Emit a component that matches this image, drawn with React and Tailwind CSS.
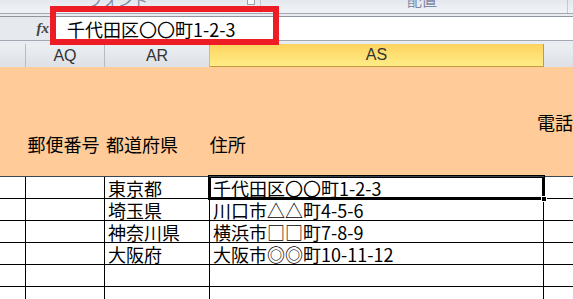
import React from 'react'

const jp = { fontFamily: '"Noto Sans CJK JP", "Noto Sans", sans-serif' }
const lat = { fontFamily: '"Liberation Sans", Arial, sans-serif' }

const rows = [
  ['東京都', '千代田区〇〇町1-2-3'],
  ['埼玉県', '川口市△△町4-5-6'],
  ['神奈川県', '横浜市□□町7-8-9'],
  ['大阪府', '大阪市◎◎町10-11-12'],
  ['', ''],
  ['', ''],
]

function Cell({ w, children, last, className = '' }) {
  return (
    <div
      className={`h-full shrink-0 flex items-end overflow-hidden whitespace-nowrap ${last ? 'flex-1' : 'border-r border-black'} ${className}`}
      style={w ? { width: w } : undefined}
    >
      {children}
    </div>
  )
}

export default function App() {
  return (
    <div className="w-[573px] h-[299px] overflow-hidden bg-white relative" style={jp}>
      {/* ribbon group labels */}
      <div className="h-[13px] bg-gradient-to-b from-[#e4e8ee] to-[#f1f3f6] relative overflow-hidden">
        <span className="absolute left-[88px] top-[-8px] text-[15px] leading-none text-[#7d8aa6]">フォント</span>
        <div className="absolute left-[247px] top-0 w-[8px] h-[5px] border-x border-b border-[#9aa3b0] bg-[#f7f8fa]" />
        <div className="absolute left-[260px] top-0 w-px h-[13px] bg-[#c4c9d0]" />
        <span className="absolute left-[407px] top-[-8px] text-[15px] leading-none text-[#7d8aa6]">配置</span>
        <div className="absolute left-[567px] top-0 w-px h-[13px] bg-[#c4c9d0]" />
      </div>
      <div className="h-px bg-[#a3a8b0]" />
      <div className="h-[2px] bg-[#e9ecf0]" />
      <div className="h-px bg-[#8f959d]" />
      {/* formula bar */}
      <div className="h-[23px] flex">
        <div className="w-[56px] bg-[#e6e9ed] flex items-center justify-end pr-[7px]">
          <span className="italic font-bold text-[15px] text-[#444] leading-none" style={{ fontFamily: '"Liberation Serif", serif' }}>fx</span>
        </div>
        <div className="flex-1 bg-white flex items-center pl-[11px]">
          <span className="text-[18px] leading-none text-black">千代田区〇〇町1-2-3</span>
        </div>
      </div>
      <div className="h-px bg-[#a3a8b0]" />
      <div className="h-[3px] bg-[#e9ecf0]" />
      {/* column headers */}
      <div className="h-[23px] flex text-[16px] text-[#333]" style={lat}>
        <div className="w-[26px] h-full bg-gradient-to-b from-[#eceff2] to-[#dde1e6] border-r border-[#b6bcc4]" />
        <div className="w-[79px] h-full bg-gradient-to-b from-[#eceff2] to-[#dde1e6] border-r border-[#b6bcc4] flex items-center justify-center">AQ</div>
        <div className="w-[105px] h-full bg-gradient-to-b from-[#eceff2] to-[#dde1e6] border-r border-[#b6bcc4] flex items-center justify-center">AR</div>
        <div className="w-[334px] h-full bg-gradient-to-b from-[#fdd35e] to-[#ffec86] border-r border-b border-[#c69a3a] flex items-center justify-center">AS</div>
        <div className="flex-1 h-full bg-gradient-to-b from-[#eceff2] to-[#dde1e6]" />
      </div>
      {/* header row */}
      <div className="h-[109px] bg-[#ffcc99] flex text-[18px] text-black leading-none">
        <div className="w-[26px]" />
        <div className="w-[79px] pt-[68px] pl-[2px] whitespace-nowrap">郵便番号</div>
        <div className="w-[105px] pt-[68px] pl-[3px] whitespace-nowrap">都道府県</div>
        <div className="w-[334px] pt-[68px] pl-[4px] whitespace-nowrap">住所</div>
        <div className="flex-1 pt-[46px] pl-[4px] whitespace-nowrap">電話</div>
      </div>
      <div className="h-px bg-[#3c4652]" />
      {/* data rows */}
      {rows.map(([pref, addr], i) => (
        <div key={i} className="h-[22px] flex border-b border-black text-[18px] leading-none text-black">
          <Cell w={26} />
          <Cell w={79} />
          <Cell w={105} className="pl-[3px] pb-[1px]">{pref}</Cell>
          <Cell w={334} className={`pl-[3px] pb-[1px] ${i === 0 ? 'relative overflow-visible' : ''}`}>
            {addr}
            {i === 0 && (
              <>
                <div className="absolute left-[-2px] top-[-2px] right-[-2px] bottom-[-2px] border-[3px] border-double border-black" />
                <div className="absolute right-[-4px] bottom-[-4px] w-[6px] h-[6px] bg-black border border-white" />
              </>
            )}
          </Cell>
          <Cell last />
        </div>
      ))}
      {/* red highlight frame */}
      <div className="absolute left-[50px] top-[6px] w-[229px] h-[39px] border-[6px] border-[#ee1c25]" />
    </div>
  )
}
